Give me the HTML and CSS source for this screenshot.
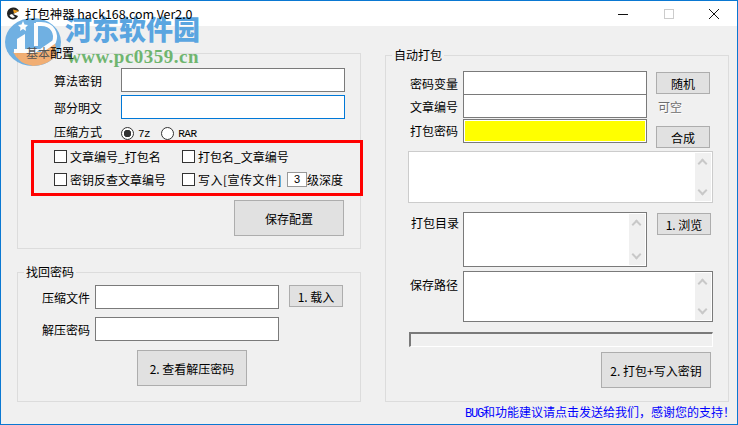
FILE: index.html
```html
<!DOCTYPE html>
<html lang="zh-CN">
<head>
    <meta charset="UTF-8">
    <title>打包神器 hack168.com Ver2.0</title>
    <link rel="stylesheet" href="styles.css">
</head>
<body>
    <div class="window">
        <div class="titlebar">
            <svg class="app-icon" width="12" height="13" viewBox="0 0 12 13">
                <path d="M6 0.5 A6 6 0 1 0 6 12.5 A6 6 0 0 0 11 9 L6 7 L12 4 A6 6 0 0 0 6 0.5 Z" fill="#222"/>
                <path d="M6 2.5 L12 4 L7 6.5 Z" fill="#f0a020"/>
                <path d="M2.5 8 A3.5 3.5 0 0 0 8 10 L5 7 Z" fill="#fff"/>
            </svg>
            <span class="title">打包神器 hack168.com Ver2.0</span>
            <div class="win-btns">
                <svg width="12" height="12" viewBox="0 0 12 12"><path d="M1 6.5H11" stroke="#111" fill="none"/></svg>
                <svg width="12" height="12" viewBox="0 0 12 12"><rect x="1.5" y="1.5" width="9" height="9" stroke="#ccc" fill="none"/></svg>
                <svg width="12" height="12" viewBox="0 0 12 12"><path d="M1 1L11 11M11 1L1 11" stroke="#111" fill="none"/></svg>
            </div>
        </div>

        <div class="content">
            <div class="left">
                <fieldset class="group basic">
                    <legend><span class="under-logo">基本</span>配置</legend>
                    <div class="row r-key"><label>算法密钥</label><div class="input w-224"></div></div>
                    <div class="row r-plain"><label>部分明文</label><div class="input w-224 focus"></div></div>
                    <div class="row r-zip">
                        <label>压缩方式</label>
                        <span class="radio on"></span><span class="mono">7z</span>
                        <span class="radio"></span><span class="mono">RAR</span>
                    </div>
                    <div class="options">
                        <div class="opt-row">
                            <span class="check-item c1"><span class="check"></span>文章编号_打包名</span>
                            <span class="check-item"><span class="check"></span>打包名_文章编号</span>
                        </div>
                        <div class="opt-row">
                            <span class="check-item c1"><span class="check"></span>密钥反查文章编号</span>
                            <span class="check-item c2"><span class="check"></span>写入[宣传文件]</span>
                            <span class="depth">3</span><span>级深度</span>
                        </div>
                    </div>
                    <div class="save-row"><button class="btn big">保存配置</button></div>
                </fieldset>

                <fieldset class="group recover">
                    <legend>找回密码</legend>
                    <div class="row r-file">
                        <label>压缩文件</label><div class="input w-184"></div>
                        <button class="btn small">1. 载入</button>
                    </div>
                    <div class="row r-pass"><label>解压密码</label><div class="input w-184"></div></div>
                    <div class="view-row"><button class="btn big">2. 查看解压密码</button></div>
                </fieldset>
            </div>

            <div class="right">
                <fieldset class="group auto">
                    <legend>自动打包</legend>
                    <div class="row a-var">
                        <label>密码变量</label><div class="input w-184"></div>
                        <button class="btn small">随机</button>
                    </div>
                    <div class="row a-num">
                        <label>文章编号</label><div class="input w-184"></div>
                        <span class="hint">可空</span>
                    </div>
                    <div class="row a-pass">
                        <label>打包密码</label><div class="input w-184 yellow"></div>
                        <button class="btn small">合成</button>
                    </div>
                    <div class="memo memo-plain"><div class="scroll"><i class="up"></i><i class="down"></i></div></div>
                    <div class="row a-dir">
                        <label>打包目录</label>
                        <div class="input memo-dir"><div class="scroll"><i class="up"></i><i class="down"></i></div></div>
                        <button class="btn small">1. 浏览</button>
                    </div>
                    <div class="row a-path">
                        <label>保存路径</label>
                        <div class="input memo-path"><div class="scroll"><i class="up"></i><i class="down"></i></div></div>
                    </div>
                    <div class="progress"></div>
                    <div class="pack-row"><button class="btn big">2. 打包+写入密钥</button></div>
                </fieldset>
                <div class="footer-note"><span class="mono-bug">BUG</span>和功能建议请点击发送给我们，感谢您的支持！</div>
            </div>
        </div>

        <!-- watermark over the top left corner -->
        <div class="watermark">
            <svg class="wm-logo" width="56" height="48" viewBox="0 0 56 48">
                <ellipse cx="28" cy="24" rx="28" ry="24" fill="#5aa5e0"/>
                <path d="M8 34 H36 L50 25 L52 36 A28 24 0 0 1 28 48 A26 24 0 0 1 8 34 Z" fill="#f2a35e"/>
                <path d="M31 6 H36 C48 6 52 16 49 24 L36 33" stroke="#fff" stroke-width="4" fill="none"/>
                <path d="M31 5 V28" stroke="#fff" stroke-width="4" fill="none"/>
                <path d="M12 21 L20 16 V31 H12 Z" fill="#fff"/>
                <path d="M9 31 H36 L30 35 H9 Z" fill="#fff"/>
                <path d="M18 3 L19.5 6.5 L23 7 L20.5 9.5 L21 13 L18 11 L15 13 L15.5 9.5 L13 7 L16.5 6.5 Z" fill="#fff"/>
            </svg>
            <div class="wm-cn">河东软件园</div>
            <div class="wm-url">www.pc0359.cn</div>
        </div>
    </div>
</body>
</html>
```

FILE: styles.css
```css
* {
    box-sizing: border-box;
}
html, body {
    margin: 0;
    padding: 0;
}
body {
    width: 738px;
    height: 425px;
    overflow: hidden;
    font-family: "Noto Sans CJK SC", "DejaVu Sans", sans-serif;
    font-size: 12px;
    color: #000;
}
.window {
    position: relative;
    width: 738px;
    height: 425px;
    border: 1px solid #0a78d2;
    background-color: #f0f0f0;
    overflow: hidden;
}
.titlebar {
    display: flex;
    align-items: center;
    height: 25px;
    background-color: #fff;
    padding-left: 6px;
}
.app-icon {
    margin-right: 6px;
}
.title {
    position: relative;
    z-index: 2;
    font-size: 12.4px;
}
.win-btns {
    display: flex;
    gap: 33.5px;
    margin-left: auto;
    margin-right: 17px;
}
.content {
    display: flex;
    align-items: flex-start;
    padding: 19px 0 0 16px;
}
.left {
    width: 344px;
    margin-right: 24px;
}
.right {
    width: 344px;
    padding-top: 2px;
}
.group {
    margin: 0;
    padding: 0;
    border: 1px solid #dcdcdc;
    min-width: 0;
}
.group legend {
    position: relative;
    z-index: 2;
    margin-left: 6px;
    padding: 0 2px;
    line-height: 16px;
    height: 16px;
}
.under-logo {
    color: #555;
}
.basic {
    height: 204px;
}
.recover {
    height: 138px;
    margin-top: 15px;
}
.auto {
    height: 355px;
}
.row {
    display: flex;
    align-items: center;
}
.row label {
    flex: none;
}
.input {
    flex: none;
    height: 24px;
    background-color: #fff;
    border: 1px solid #7a7a7a;
}
.w-224 {
    width: 224px;
}
.w-184 {
    width: 184px;
}
.focus {
    border-color: #0078d7;
}
.yellow {
    background-color: #ff0;
    box-shadow: inset 0 0 0 1px #fff;
}
.btn {
    font-family: inherit;
    font-size: 12px;
    padding: 0;
    background-color: #e1e1e1;
    border: 1px solid #adadad;
    color: #000;
}
.small {
    flex: none;
    width: 54px;
    height: 22px;
}
.big {
    width: 110px;
    height: 36px;
}

/* basic group */
.r-key, .r-plain, .r-zip {
    padding-left: 36px;
}
.r-key label, .r-plain label, .r-zip label {
    width: 67px;
}
.r-key {
    margin-top: 7px;
}
.r-plain {
    margin-top: 3px;
}
.r-zip {
    margin-top: 4px;
    height: 17px;
}
.mono {
    font-family: "Liberation Mono", monospace;
    font-size: 11px;
    letter-spacing: -0.5px;
    margin: 4px 11px 0 4px;
}
.mono-bug {
    font-family: "Liberation Mono", monospace;
    font-size: 12px;
    letter-spacing: -1.2px;
}
.radio {
    flex: none;
    width: 13px;
    height: 13px;
    margin-top: 4px;
    border: 1px solid #333;
    border-radius: 50%;
    background-color: #fff;
}
.radio.on {
    background: radial-gradient(circle, #333 0 3.5px, #fff 4px);
}
.options {
    width: 332px;
    height: 56px;
    margin-left: 13px;
    padding: 2px 0 0 20px;
    border: 3px solid #f00;
}
.opt-row {
    display: flex;
    align-items: center;
    height: 22px;
    margin-bottom: 1px;
}
.check-item {
    display: flex;
    align-items: center;
}
.c1 {
    width: 128px;
}
.c2 {
    width: 105px;
    letter-spacing: 0.5px;
}
.check {
    flex: none;
    width: 13px;
    height: 13px;
    margin-right: 3px;
    background-color: #fff;
    border: 1px solid #333;
}
.depth {
    width: 20px;
    height: 15px;
    background-color: #fff;
    border: 1px solid #999;
    text-align: center;
    line-height: 13px;
    font-family: "Liberation Sans", sans-serif;
    font-size: 11px;
}
.save-row {
    display: flex;
    justify-content: flex-end;
    margin-top: 4px;
    padding-right: 16px;
}

/* recover group */
.r-file, .r-pass {
    padding-left: 24px;
}
.r-file label, .r-pass label {
    width: 53px;
}
.r-file {
    margin-top: 5px;
}
.r-file .small {
    align-self: flex-start;
    margin-left: 10px;
}
.r-pass {
    margin-top: 8px;
}
.view-row {
    margin: 9px 0 0 119px;
}

/* auto group */
.a-var, .a-num, .a-pass, .a-dir, .a-path {
    padding-left: 24px;
}
.a-var label, .a-num label, .a-pass label, .a-path label {
    width: 53px;
}
.a-var {
    margin-top: 8px;
}
.a-var .small {
    margin-left: 9px;
}
.a-num {
    margin-top: -1px;
}
.hint {
    margin-left: 11px;
    color: #6d6d6d;
    text-shadow: 1px 1px #fff;
}
.a-pass {
    align-items: flex-start;
    margin-top: 1px;
}
.a-pass label {
    line-height: 24px;
}
.a-pass .small {
    margin: 7px 0 0 9px;
}
.memo {
    position: relative;
    height: 52px;
    width: 305px;
    margin: 3px 0 0 22px;
    background-color: #fff;
    border: 1px solid #ccc;
}
.a-dir {
    align-items: flex-start;
    margin-top: 9px;
    padding-left: 25px;
}
.a-dir label {
    width: 52px;
    line-height: 22px;
}
.memo-dir {
    position: relative;
    width: 184px;
    height: 55px;
}
.a-dir .small {
    margin: 1px 0 0 10px;
}
.a-path {
    align-items: flex-start;
    margin-top: 4px;
}
.a-path label {
    line-height: 22px;
    margin-top: 3px;
}
.memo-path {
    position: relative;
    width: 250px;
    height: 51px;
}
.scroll {
    position: absolute;
    top: 1px;
    right: 1px;
    bottom: 1px;
    width: 16px;
    background-color: #f0f0f0;
}
.scroll i {
    position: absolute;
    left: 4px;
    width: 7px;
    height: 7px;
    border-left: 2px solid #c8c8c8;
    border-top: 2px solid #c8c8c8;
}
.up {
    top: 7px;
    transform: rotate(45deg);
}
.down {
    bottom: 7px;
    transform: rotate(225deg);
}
.progress {
    width: 304px;
    height: 15px;
    margin: 10px 0 0 23px;
    background-color: #f0f0f0;
    border: 1px solid #fff;
    border-top: 2px solid #7a7a7a;
    border-left: 2px solid #7a7a7a;
}
.pack-row {
    display: flex;
    justify-content: flex-end;
    margin-top: 5px;
    padding-right: 17px;
}
.footer-note {
    margin: 2px -6px 0 0;
    text-align: right;
    color: #00f;
    font-size: 12px;
    line-height: 16px;
    white-space: nowrap;
}

/* watermark */
.watermark {
    position: absolute;
    top: 0;
    left: 0;
    pointer-events: none;
}
.wm-logo {
    position: absolute;
    top: 17px;
    left: 4px;
    opacity: 0.85;
}
.wm-cn {
    position: absolute;
    top: 12px;
    left: 64px;
    width: 150px;
    font-weight: 900;
    font-size: 27px;
    line-height: 32px;
    color: #5aa5e0;
    white-space: nowrap;
}
.wm-url {
    position: absolute;
    top: 46px;
    left: 66px;
    font-family: "Liberation Serif", serif;
    font-weight: bold;
    font-size: 19px;
    line-height: 20px;
    letter-spacing: 0.5px;
    color: #6fb56f;
    white-space: nowrap;
}
```
